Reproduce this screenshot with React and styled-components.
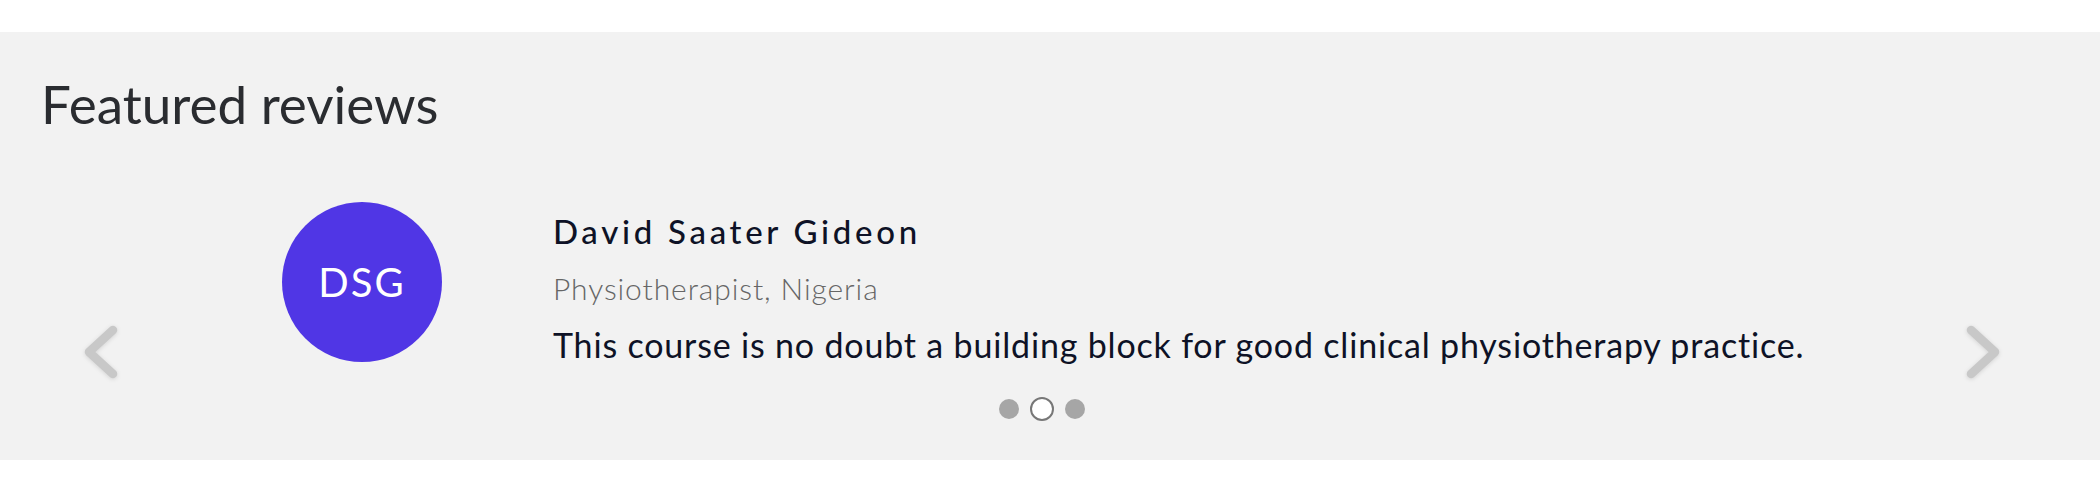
import React from 'react';
import styled, { createGlobalStyle } from 'styled-components';

const GlobalStyle = createGlobalStyle`
  html, body {
    margin: 0;
    padding: 0;
    background: #fff;
    font-family: Lato, "Open Sans", sans-serif;
  }
`;

// Layout
const Section = styled.section`
  margin-top: 32px;
  background: #f2f2f2;
  padding: 41px 0 39px;
`;

const Heading = styled.h2`
  margin: 0;
  padding: 0 41px;
  font-size: 53px;
  line-height: 62px;
  font-weight: 400;
  color: #2a2c30;
`;

const Carousel = styled.div`
  display: flex;
  align-items: flex-start;
  margin-top: 67px;
  padding-right: 16px;
`;

const ArrowButton = styled.button`
  flex: 0 0 202px;
  height: 56px;
  margin-top: 122px;
  display: flex;
  align-items: center;
  justify-content: center;
  border: none;
  background: none;
  padding: 0;
  cursor: pointer;

  svg {
    filter: drop-shadow(0 1px 2px rgba(0, 0, 0, 0.12));
  }
`;

const Track = styled.div`
  flex: 1;
  display: flex;
  flex-direction: column;
`;

const Slide = styled.div`
  display: flex;
  align-items: flex-start;
  gap: 111px;
  padding-left: 80px;
`;

const Avatar = styled.div`
  flex: 0 0 160px;
  height: 160px;
  border-radius: 50%;
  background: #5036e5;
  color: #fff;
  display: flex;
  align-items: center;
  justify-content: center;
  font-size: 40px;
  letter-spacing: 2px;
`;

const Body = styled.div`
  margin-top: 9px;
  display: flex;
  flex-direction: column;
`;

const Name = styled.div`
  font-size: 33px;
  line-height: 40px;
  font-weight: 500;
  letter-spacing: 3.7px;
  color: #0e1226;
`;

const Role = styled.div`
  margin-top: 19px;
  font-size: 30px;
  line-height: 36px;
  font-weight: 300;
  letter-spacing: 0.9px;
  color: #666;
`;

const Quote = styled.p`
  margin: 18px 0 0;
  font-size: 34px;
  line-height: 41px;
  letter-spacing: 0.82px;
  color: #0e1226;
`;

const Dots = styled.div`
  margin-top: 32px;
  display: flex;
  align-items: center;
  justify-content: center;
  gap: 11px;
  height: 24px;
`;

const Dot = styled.span`
  box-sizing: border-box;
  width: ${p => (p.$active ? 24 : 20)}px;
  height: ${p => (p.$active ? 24 : 20)}px;
  border-radius: 50%;
  background: ${p => (p.$active ? '#fff' : '#a6a6a6')};
  border: ${p => (p.$active ? '2px solid #777' : 'none')};
`;

const Chevron = ({ dir }) => (
  <svg width="40" height="56" viewBox="0 0 40 56">
    <polyline
      points={dir === 'left' ? '32,6 8,28 32,50' : '8,6 32,28 8,50'}
      fill="none"
      stroke="#c8c8c8"
      strokeWidth="8.5"
      strokeLinecap="round"
      strokeLinejoin="round"
    />
  </svg>
);

const App = () => {
  return (
    <>
      <GlobalStyle />
      <Section>
        <Heading>Featured reviews</Heading>
        <Carousel>
          <ArrowButton aria-label="Previous">
            <Chevron dir="left" />
          </ArrowButton>
          <Track>
            <Slide>
              <Avatar>DSG</Avatar>
              <Body>
                <Name>David Saater Gideon</Name>
                <Role>Physiotherapist, Nigeria</Role>
                <Quote>This course is no doubt a building block for good clinical physiotherapy practice.</Quote>
              </Body>
            </Slide>
            <Dots>
              <Dot />
              <Dot $active />
              <Dot />
            </Dots>
          </Track>
          <ArrowButton aria-label="Next">
            <Chevron dir="right" />
          </ArrowButton>
        </Carousel>
      </Section>
    </>
  );
};

export default App;
